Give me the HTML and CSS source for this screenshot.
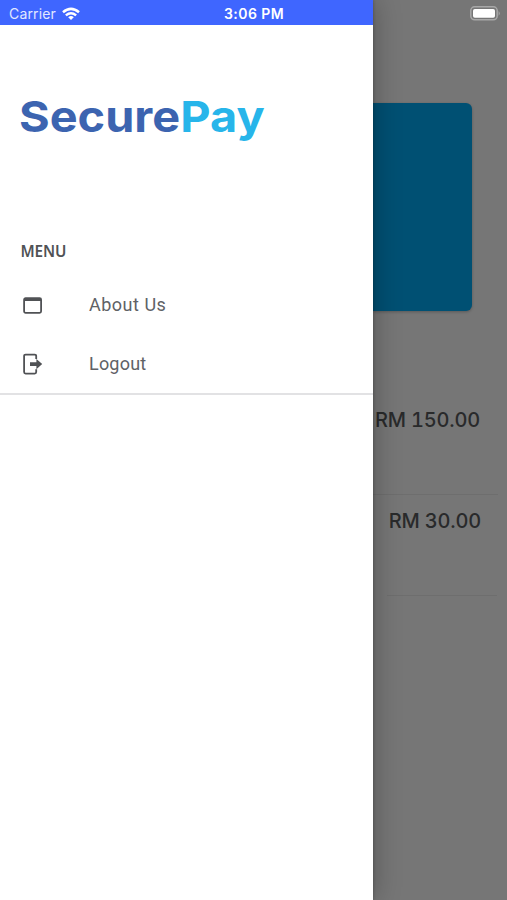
FILE: index.html
```html
<!DOCTYPE html>
<html lang="en">
<head>
<meta charset="utf-8">
<title>SecurePay</title>
<link rel="stylesheet" href="styles.css">
</head>
<body>
<div class="app">
  <aside class="drawer">
    <header class="status">
      <span class="carrier">Carrier</span>
      <svg class="wifi" width="18" height="14" viewBox="0 0 20 15" fill="none" stroke="#fff" stroke-width="2.8"><path d="M1.1 5.6Q10-2 18.9 5.6M4.3 9Q10 4.3 15.7 9"/><path d="M6.9 11.1Q10 8.4 13.1 11.1L10 14.2Z" fill="#fff" stroke="none"/></svg>
      <time class="clock">3:06 PM</time>
    </header>
    <h1 class="logo"><span class="secure">Secure</span><span class="pay">Pay</span></h1>
    <h2 class="heading">MENU</h2>
    <nav class="menu">
      <a class="item">
        <svg width="20" height="22" viewBox="0 0 20 22" fill="none" stroke="#505255" stroke-width="1.8"><rect x="1.1" y="4.2" width="17" height="14.6" rx="1.5"/><path d="M1.1 5.5H18.1" stroke-width="3"/></svg>
        <span class="about">About Us</span>
      </a>
      <a class="item">
        <svg width="20" height="22" viewBox="0 0 20 22" fill="none" stroke="#505255" stroke-width="1.8"><path d="M13.2 5.9V3.1Q13.2 1.6 11.7 1.6H2.6Q1.1 1.6 1.1 3.1V19.1Q1.1 20.6 2.6 20.6H11.7Q13.2 20.6 13.2 19.1V16.3"/><path d="M7 9.2H13.4V6L19.2 11.1L13.4 16.2V13H7Z" fill="#505255" stroke="none"/></svg>
        <span class="logout">Logout</span>
      </a>
    </nav>
  </aside>
  <main class="page">
    <div class="top">
      <svg width="31" height="15" viewBox="0 0 31 15"><rect x=".8" y=".8" width="26.4" height="13" rx="3.8" fill="none" stroke="#a8a8a8" stroke-width="1.5"/><rect x="3" y="3" width="22" height="8.8" rx="1.8" fill="#fff"/><path d="M28.6 4.9Q31 7.3 28.6 9.7Z" fill="#a8a8a8"/></svg>
    </div>
    <div class="card"></div>
    <div class="row first"><span>RM 150.00</span></div>
    <div class="row second"><span>RM 30.00</span></div>
  </main>
</div>
</body>
</html>
```
FILE: styles.css
```css
body { margin: 0; font-family: Roboto, sans-serif; }
.app { display: grid; grid-template-columns: 372.5px minmax(0, 1fr); width: 507px; height: 900px; overflow: hidden; background: #767676; }
.drawer { background: #fff; display: flex; flex-direction: column; z-index: 1; box-shadow: 0 0 26px rgba(0, 0, 0, .3), 0 0 3px rgba(0, 0, 0, .25); }
.status { height: 25px; background: #3f66ff; color: #fff; display: flex; align-items: center; padding: 2px 0 0 9px; box-sizing: border-box; font: 14px/20px Inter, sans-serif; white-space: nowrap; }
.carrier { width: 47px; margin-right: 6px; color: #e2e8ff; letter-spacing: .15px; }
.clock { margin-left: 144px; font-weight: 600; letter-spacing: .45px; }
.logo { margin: 64px 0 0 19px; width: 226px; height: 54px; font: 700 43px/54px Inter, sans-serif; white-space: nowrap; transform: scaleX(1.09); transform-origin: 0 0; }
.secure { color: #3c64b0; }
.pay { color: #27b5ea; }
.heading { margin: 97px 0 0 20.5px; height: 22px; color: #505255; font: 600 15.3px/23px "Noto Sans", sans-serif; letter-spacing: -.1px; }
.menu { margin-top: 14px; height: 117px; border-bottom: 2px solid #e2e2e4; }
.item { display: flex; align-items: center; height: 58.5px; padding-left: 23px; gap: 46px; color: #606266; font-size: 18px; letter-spacing: .5px; }
.logout { letter-spacing: .2px; }
.about { position: relative; top: -1px; }
.page { display: flex; flex-direction: column; }
.top { height: 103px; box-sizing: border-box; padding: 6px 6px 0 0; text-align: right; }
.card { height: 208px; width: 99.5px; background: #005073; border-radius: 0 6px 6px 0; box-shadow: 0 1px 3px rgba(0, 0, 0, .25); }
.row { display: flex; justify-content: flex-end; box-sizing: border-box; border-bottom: 1px solid #6e6e6e; color: #292a2b; font: 500 20px/28px Inter, sans-serif; font-variant-numeric: tabular-nums; letter-spacing: -.2px; white-space: nowrap; }
.first { margin: 95px 9px 0 0; height: 89px; padding: 0 18px 0 0; }
.second { margin: 0 10px 0 14px; height: 101px; padding: 12px 16px 0 0; }
```
